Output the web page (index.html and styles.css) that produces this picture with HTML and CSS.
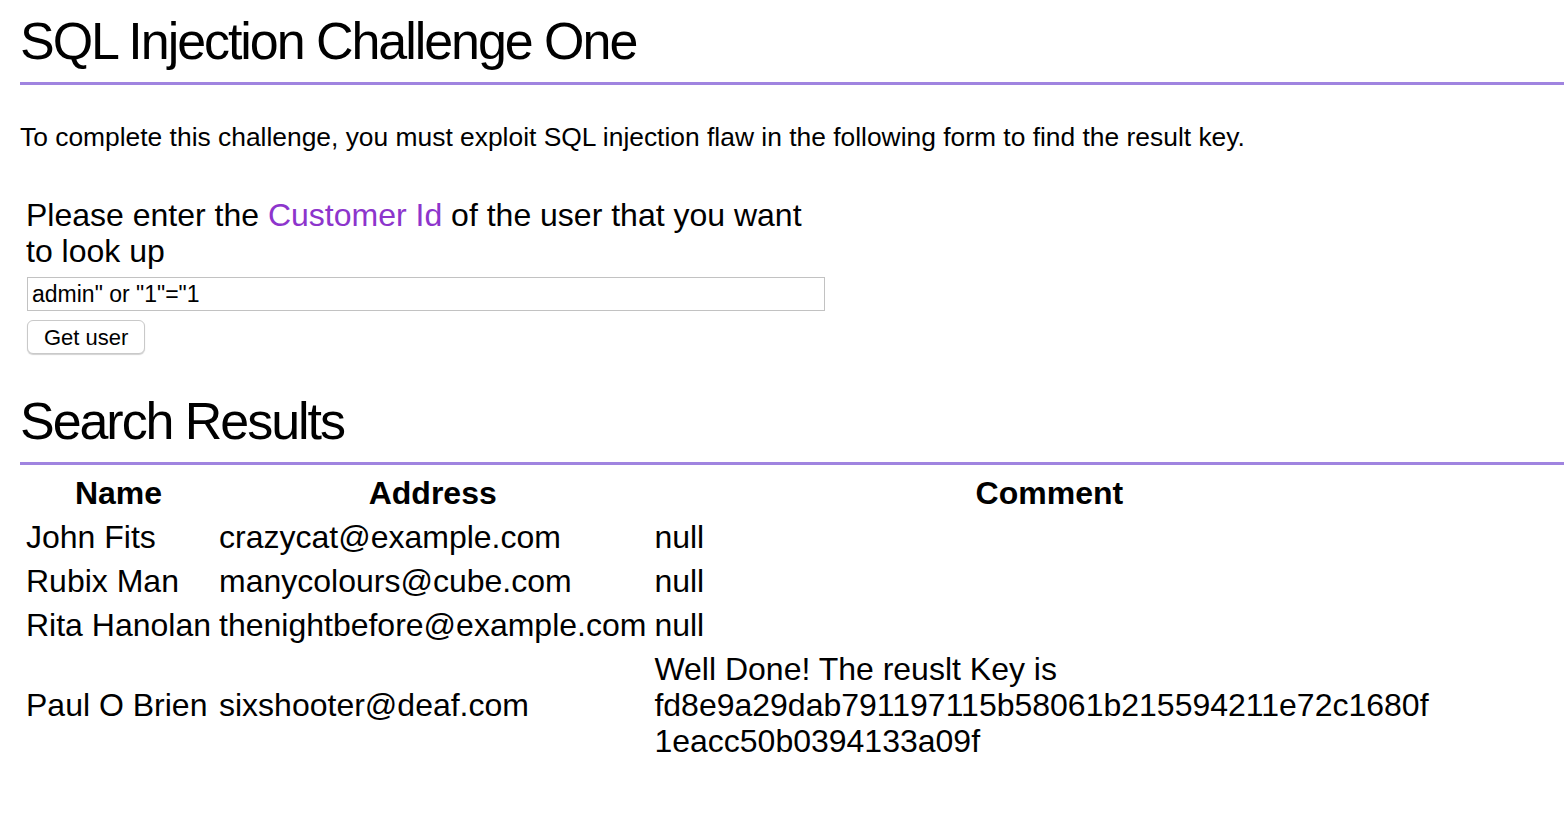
FILE: index.html
```html
<!DOCTYPE html>
<html lang="en">
<head>
<meta charset="utf-8">
<title>SQL Injection Challenge One</title>
<link rel="stylesheet" href="styles.css">
</head>
<body>
<main class="page">
  <h1 class="title">SQL Injection Challenge One</h1>
  <p class="intro">To complete this challenge, you must exploit SQL injection flaw in the following form to find the result key.</p>
  <form class="lookup">
    <p class="prompt">Please enter the <span class="accent">Customer Id</span> of the user that you want to look up</p>
    <input class="field" type="text" value='admin" or "1"="1'>
    <button class="btn" type="button">Get user</button>
  </form>
  <h1 class="title results-title">Search Results</h1>
  <table class="results">
    <thead>
      <tr><th>Name</th><th>Address</th><th class="comment-head">Comment</th></tr>
    </thead>
    <tbody>
      <tr><td>John Fits</td><td>crazycat@example.com</td><td class="comment">null</td></tr>
      <tr><td>Rubix Man</td><td>manycolours@cube.com</td><td class="comment">null</td></tr>
      <tr><td>Rita Hanolan</td><td>thenightbefore@example.com</td><td class="comment">null</td></tr>
      <tr><td>Paul O Brien</td><td>sixshooter@deaf.com</td><td class="comment">Well Done! The reuslt Key is fd8e9a29dab791197115b58061b215594211e72c1680f1eacc50b0394133a09f</td></tr>
    </tbody>
  </table>
</main>
</body>
</html>
```
FILE: styles.css
```css
html, body {
  margin: 0;
  padding: 0;
  background: #ffffff;
}

body {
  font-family: "Liberation Sans", Arial, Helvetica, sans-serif;
  color: #000000;
}

.page {
  padding: 12px 0 0 20px;
}

.title {
  margin: 0;
  font-size: 52px;
  font-weight: normal;
  line-height: 58px;
  letter-spacing: -2.05px;
  padding-bottom: 12px;
  border-bottom: 3px solid #a084e0;
}

.intro {
  margin: 37px 0 0 0;
  font-size: 26.4px;
  line-height: 30px;
}

.lookup {
  margin: 45px 0 0 6px;
  width: 800px;
  display: flex;
  flex-direction: column;
  align-items: flex-start;
}

.prompt {
  margin: 0;
  font-size: 32px;
  line-height: 36px;
}

.accent {
  color: #8d35cc;
}

.field {
  box-sizing: border-box;
  margin: 8px 0 0 1px;
  width: 798px;
  height: 34px;
  padding: 0 4px;
  border: 1px solid #c2c2c2;
  border-radius: 0;
  font-family: "Liberation Sans", Arial, Helvetica, sans-serif;
  font-size: 23px;
  color: #000;
  background: #fff;
  outline: none;
}

.btn {
  box-sizing: border-box;
  margin: 9px 0 0 1px;
  height: 34px;
  padding: 2px 16px 0;
  border: 1px solid #c9c9c9;
  border-radius: 6px;
  background: #ffffff;
  box-shadow: 0 1px 1px rgba(0, 0, 0, 0.18);
  font-family: "Liberation Sans", Arial, Helvetica, sans-serif;
  font-size: 22px;
  color: #000;
}

.results-title {
  margin-top: 38px;
}

.results {
  margin-top: 4px;
  border-collapse: separate;
  border-spacing: 4px;
  font-size: 32px;
  line-height: 36px;
}

.results th {
  font-weight: bold;
  text-align: center;
  padding: 2px;
}

.results td {
  padding: 2px;
  text-align: left;
  vertical-align: middle;
  white-space: nowrap;
}

.results .comment-head {
  width: 790px;
}

.results td.comment {
  white-space: normal;
  overflow-wrap: anywhere;
}
```
